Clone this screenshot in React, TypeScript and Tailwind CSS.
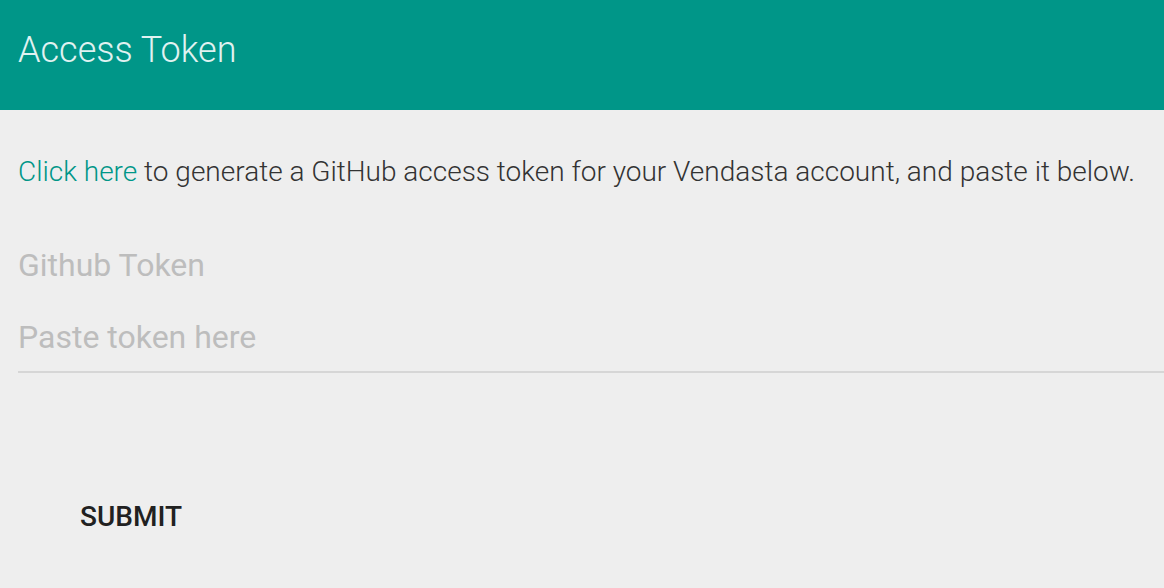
import React from "react";

export default function App() {
  return (
    <div className="w-[1164px] h-[588px] bg-[#eeeeee] overflow-hidden" style={{ fontFamily: "Roboto, 'Noto Sans', sans-serif" }}>
      <div className="h-[110px] bg-[#009688] flex items-center px-[18px]">
        <h1 className="text-[36px] font-light text-[#e0f2f1] leading-none -mt-[10px]">Access Token</h1>
      </div>
      <div className="pl-[18px]">
        <p className="mt-[46px] text-[28px] font-light text-[#333333] leading-[32px] whitespace-nowrap">
          <a className="text-[#009688]">Click here</a> to generate a GitHub access token for your Vendasta account, and paste it below.
        </p>
        <div className="mt-[59px] text-[32px] text-[#bdbdbd] leading-[36px]">Github Token</div>
        <div className="mt-[36px] border-b-2 border-[#d6d6d6] pb-[16px]">
          <div className="text-[32px] text-[#bdbdbd] leading-[36px]">Paste token here</div>
        </div>
        <div className="mt-[130px] pl-[62px]">
          <button className="text-[28px] font-medium text-[#212121] leading-none">SUBMIT</button>
        </div>
      </div>
    </div>
  );
}
